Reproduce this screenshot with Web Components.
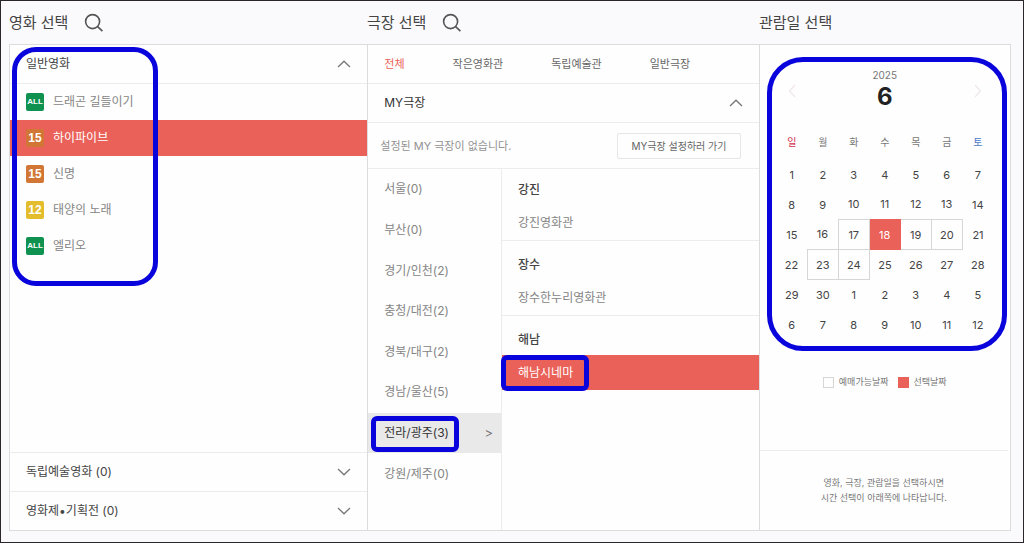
<!DOCTYPE html>
<html lang="ko">
<head>
<meta charset="utf-8">
<meta name="viewport" content="width=device-width, initial-scale=1">
<title>영화 예매</title>
<style>
  :root {
    --accent: #ea6159;
    --line: #ececec;
    --frame: #dcdcde;
    --mark: #0a04dc;
    --ink: #444;
    --soft: #858585;
  }
  body {
    margin: 0;
    font-family: "Inter", "Noto Sans CJK KR", sans-serif;
    font-size: 12px;
    line-height: 16px;
    color: var(--ink);
  }
</style>
</head>
<body>
<booking-page></booking-page>

<script>
const RESET = `
  *, *::before, *::after { box-sizing: border-box; }
  button { font: inherit; color: inherit; background: none; border: 0; margin: 0; padding: 0; text-align: left; cursor: pointer; white-space: nowrap; }
  ul { list-style: none; margin: 0; padding: 0; }
`;

class BaseElement extends HTMLElement {
  constructor() {
    super();
    this.attachShadow({ mode: 'open' });
  }
  connectedCallback() {
    this.shadowRoot.innerHTML = `<style>${RESET}${this.styles()}</style>${this.markup()}`;
  }
  styles() { return ''; }
  markup() { return '<slot></slot>'; }
}

/* Line icons: search, up, down, left, right */
const ICONS = {
  search: '<svg width="20" height="20" viewBox="0 0 20 20" stroke-width="1.6"><circle cx="8.6" cy="8.6" r="7"/><path d="M13.6 13.6L18.4 18.2"/></svg>',
  up: '<svg width="14" height="8" viewBox="0 0 14 8" stroke-width="1.3"><path d="M1 7L7 1.2L13 7"/></svg>',
  down: '<svg width="14" height="8" viewBox="0 0 14 8" stroke-width="1.3"><path d="M1 1L7 6.8L13 1"/></svg>',
  left: '<svg width="8" height="14" viewBox="0 0 8 14" stroke-width="1.3"><path d="M7 1L1.5 7L7 13"/></svg>',
  right: '<svg width="8" height="14" viewBox="0 0 8 14" stroke-width="1.3"><path d="M1 1L6.5 7L1 13"/></svg>'
};
customElements.define('line-icon', class extends BaseElement {
  styles() { return ':host { display: inline-flex; color: #777; } svg { display: block; fill: none; stroke: currentColor; }'; }
  markup() { return ICONS[this.getAttribute('name')]; }
});

/* Pen mark drawn around its host's positioned parent */
customElements.define('pen-mark', class extends BaseElement {
  styles() { return ':host { display: block; position: absolute; box-sizing: border-box; border: 5px solid var(--mark); pointer-events: none; z-index: 2; }'; }
});

customElements.define('column-title', class extends BaseElement {
  styles() { return `
    :host { display: flex; align-items: center; gap: 16px; height: 43px; color: #444; }
    h2 { margin: 0; font-size: 15px; line-height: 24px; font-weight: 400; white-space: nowrap; }
    button { display: flex; }
    line-icon { color: #555; }`; }
  markup() {
    const search = this.hasAttribute('search') ? '<button type="button" aria-label="검색"><line-icon name="search"></line-icon></button>' : '';
    return `<h2><slot></slot></h2>${search}`;
  }
});

customElements.define('fold-header', class extends BaseElement {
  styles() { return `
    :host { display: block; }
    button { display: flex; width: 100%; height: 38px; align-items: center; justify-content: space-between; padding: 0 16px; }`; }
  markup() {
    const dir = this.hasAttribute('open') ? 'up' : 'down';
    return `<button type="button" aria-expanded="${dir === 'up'}"><span><slot></slot></span><line-icon name="${dir}"></line-icon></button>`;
  }
});

customElements.define('rating-badge', class extends BaseElement {
  styles() {
    const colors = { ALL: '#0f9150', 12: '#e3bd2c', 15: '#d27635' };
    return `
    :host { display: flex; width: 18px; height: 18px; border-radius: 2px; align-items: center; justify-content: center; color: #fff;
      background: ${colors[this.getAttribute('rating')]}; font: bold ${this.getAttribute('rating') === 'ALL' ? 8 : 12}px/18px "Liberation Sans", sans-serif; }`;
  }
  markup() { return `<span>${this.getAttribute('rating')}</span>`; }
});

customElements.define('movie-item', class extends BaseElement {
  styles() { return `
    :host { display: block; color: var(--soft); }
    :host([selected]) { background: var(--accent); color: #fff; }
    button { display: flex; width: 100%; height: 36px; align-items: center; gap: 9px; padding: 0 16px; }`; }
  markup() { return `<button type="button"><rating-badge rating="${this.getAttribute('rating')}"></rating-badge><span><slot></slot></span></button>`; }
});

customElements.define('movie-panel', class extends BaseElement {
  styles() { return `
    :host { display: flex; flex-direction: column; position: relative; }
    .list { flex: 1; border-top: 1px solid var(--line); }
    fold-header.closed { border-top: 1px solid var(--line); }
    pen-mark { left: 2px; top: 2px; width: 146px; height: 239px; border-radius: 24px; }`; }
  markup() { return `
    <fold-header open>일반영화</fold-header>
    <div class="list">
      <movie-item rating="ALL">드래곤 길들이기</movie-item>
      <movie-item rating="15" selected>하이파이브</movie-item>
      <movie-item rating="15">신명</movie-item>
      <movie-item rating="12">태양의 노래</movie-item>
      <movie-item rating="ALL">엘리오</movie-item>
    </div>
    <fold-header class="closed">독립예술영화 (0)</fold-header>
    <fold-header class="closed">영화제•기획전 (0)</fold-header>
    <pen-mark></pen-mark>`; }
});

customElements.define('region-item', class extends BaseElement {
  styles() { return `
    :host { display: block; position: relative; color: var(--soft); }
    :host([selected]) { background: #e9e9e9; color: #333; }
    button { display: flex; width: 100%; height: 100%; align-items: center; justify-content: space-between; padding: 0 8px 0 16px; }
    .arrow { color: #777; font-size: 13px; }
    pen-mark { left: 3px; top: 3px; width: 88px; height: 36px; border-radius: 6px; }`; }
  markup() {
    const on = this.hasAttribute('selected');
    return `<button type="button"><span><slot></slot></span>${on ? '<span class="arrow">&gt;</span>' : ''}</button>${on ? '<pen-mark></pen-mark>' : ''}`;
  }
});

customElements.define('cinema-group', class extends BaseElement {
  styles() { return `
    :host { display: block; border-bottom: 1px solid var(--line); }
    :host(:first-child) h3 { padding-top: 5px; }
    :host(:last-child) { border-bottom: 0; }
    h3 { margin: 0; padding: 8px 16px 0; font-size: 12px; line-height: 31px; font-weight: 500; color: #444; }
    .item { position: relative; color: var(--soft); }
    .item button { display: block; width: 100%; height: 35px; padding: 0 16px; }
    :host([selected]) .item { background: var(--accent); color: #fff; }
    pen-mark { left: -1px; top: 0; width: 88px; height: 36px; border-radius: 6px; }`; }
  markup() { return `
    <h3>${this.getAttribute('city')}</h3>
    <div class="item"><button type="button"><slot></slot></button>${this.hasAttribute('selected') ? '<pen-mark></pen-mark>' : ''}</div>`; }
});

customElements.define('theater-panel', class extends BaseElement {
  styles() { return `
    :host { display: flex; flex-direction: column; border-left: 1px solid var(--frame); }
    nav { display: flex; gap: 48px; height: 38px; align-items: center; padding: 0 16px; font-size: 11px; color: #666; }
    nav .on { color: var(--accent); }
    fold-header { border-top: 1px solid var(--line); color: #333; }
    .mine { display: flex; align-items: center; justify-content: space-between; height: 46px; padding: 0 18px 0 12px; border-top: 1px solid var(--line); font-size: 11px; color: #929292; }
    .mine button { height: 26px; padding: 0 13px; border: 1px solid #e6e6e6; border-radius: 2px; font-size: 10px; color: #666; }
    .split { flex: 1; display: grid; grid-template-columns: 133fr 258fr; border-top: 1px solid var(--line); }
    .regions { display: grid; grid-auto-rows: 1fr; padding-bottom: 36px; }
    .cinemas { border-left: 1px solid var(--line); }`; }
  markup() { return `
    <nav>
      <button type="button" class="on">전체</button>
      <button type="button">작은영화관</button>
      <button type="button">독립예술관</button>
      <button type="button">일반극장</button>
    </nav>
    <fold-header open>MY극장</fold-header>
    <div class="mine"><span>설정된 MY 극장이 없습니다.</span><button type="button">MY극장 설정하러 가기</button></div>
    <div class="split">
      <div class="regions">
        <region-item>서울(0)</region-item>
        <region-item>부산(0)</region-item>
        <region-item>경기/인천(2)</region-item>
        <region-item>충청/대전(2)</region-item>
        <region-item>경북/대구(2)</region-item>
        <region-item>경남/울산(5)</region-item>
        <region-item selected>전라/광주(3)</region-item>
        <region-item>강원/제주(0)</region-item>
      </div>
      <div class="cinemas">
        <cinema-group city="강진">강진영화관</cinema-group>
        <cinema-group city="장수">장수한누리영화관</cinema-group>
        <cinema-group city="해남" selected>해남시네마</cinema-group>
      </div>
    </div>`; }
});

customElements.define('month-calendar', class extends BaseElement {
  styles() { return `
    :host { display: block; position: relative; padding: 22px 16px 0; }
    header { display: grid; grid-template-columns: 31px 1fr 31px; width: 217px; margin: 0 auto; align-items: center; text-align: center; }
    header button { display: flex; justify-content: center; padding-top: 4px; }
    header line-icon { color: #f1e8ea; }
    .year { font-size: 10px; line-height: 16px; color: #777; }
    .month { font-size: 24px; line-height: 28px; font-weight: 700; color: #222; }
    table { width: 217px; margin: 14px auto 0; border-collapse: collapse; table-layout: fixed; }
    th, td { padding: 0; text-align: center; }
    th { height: 34px; font-size: 10px; font-weight: 400; color: #777; }
    th:first-child { color: #d0344f; }
    th:last-child { color: #4a78c8; }
    td { height: 30px; font-size: 11px; color: #444; }
    td button { display: block; width: 100%; height: 29px; padding-top: 1px; text-align: center; }
    td.open { border: 1px solid #d6d6d6; }
    td.picked { background: var(--accent); border: 1px solid var(--accent); color: #fff; }
    pen-mark { left: 7px; right: 3px; top: 12px; height: 294px; border-radius: 36px; }`; }
  markup() {
    const open = [17, 19, 20, 23, 24];
    let rows = '';
    for (let r = 0; r < 6; r++) {
      rows += '<tr>';
      for (let c = 0; c < 7; c++) {
        const n = r * 7 + c + 1;
        const cls = n === 18 ? 'picked' : open.includes(n) ? 'open' : '';
        rows += `<td class="${cls}"><button type="button">${n > 30 ? n - 30 : n}</button></td>`;
      }
      rows += '</tr>';
    }
    const days = [...'일월화수목금토'].map(d => `<th scope="col">${d}</th>`).join('');
    return `
    <header>
      <button type="button" aria-label="이전 달"><line-icon name="left"></line-icon></button>
      <div><div class="year">2025</div><div class="month">6</div></div>
      <button type="button" aria-label="다음 달"><line-icon name="right"></line-icon></button>
    </header>
    <table><thead><tr>${days}</tr></thead><tbody>${rows}</tbody></table>
    <pen-mark></pen-mark>`;
  }
});

customElements.define('date-panel', class extends BaseElement {
  styles() { return `
    :host { display: flex; flex-direction: column; border-left: 1px solid var(--frame); }
    .legend { display: flex; justify-content: center; gap: 9px; margin-top: 35px; font-size: 9px; color: #777; }
    .legend li { display: flex; align-items: center; gap: 5px; }
    .box { width: 11px; height: 11px; border: 1px solid #d6d6d6; }
    .box.on { background: var(--accent); border-color: var(--accent); }
    .hint { margin: auto 2px 0 0; height: 80px; padding-top: 24px; border-top: 1px solid var(--line); text-align: center; font-size: 9px; line-height: 15px; color: #777; }`; }
  markup() { return `
    <month-calendar></month-calendar>
    <ul class="legend">
      <li><span class="box"></span>예매가능날짜</li>
      <li><span class="box on"></span>선택날짜</li>
    </ul>
    <p class="hint">영화, 극장, 관람일을 선택하시면<br>시간 선택이 아래쪽에 나타납니다.</p>`; }
});

customElements.define('booking-page', class extends BaseElement {
  styles() { return `
    :host { display: flex; flex-direction: column; box-sizing: border-box; min-height: 100vh; padding: 0 12px 11px 8px; border: 1px solid #2a2629; background: #fafafc; }
    .titles, .panels { display: grid; grid-template-columns: 358fr 392fr 252fr; }
    .panels { flex: 1; border: 1px solid var(--frame); background: #fefefe; }`; }
  markup() { return `
    <div class="titles">
      <column-title search>영화 선택</column-title>
      <column-title search>극장 선택</column-title>
      <column-title>관람일 선택</column-title>
    </div>
    <div class="panels">
      <movie-panel></movie-panel>
      <theater-panel></theater-panel>
      <date-panel></date-panel>
    </div>`; }
});
</script>
</body>
</html>
